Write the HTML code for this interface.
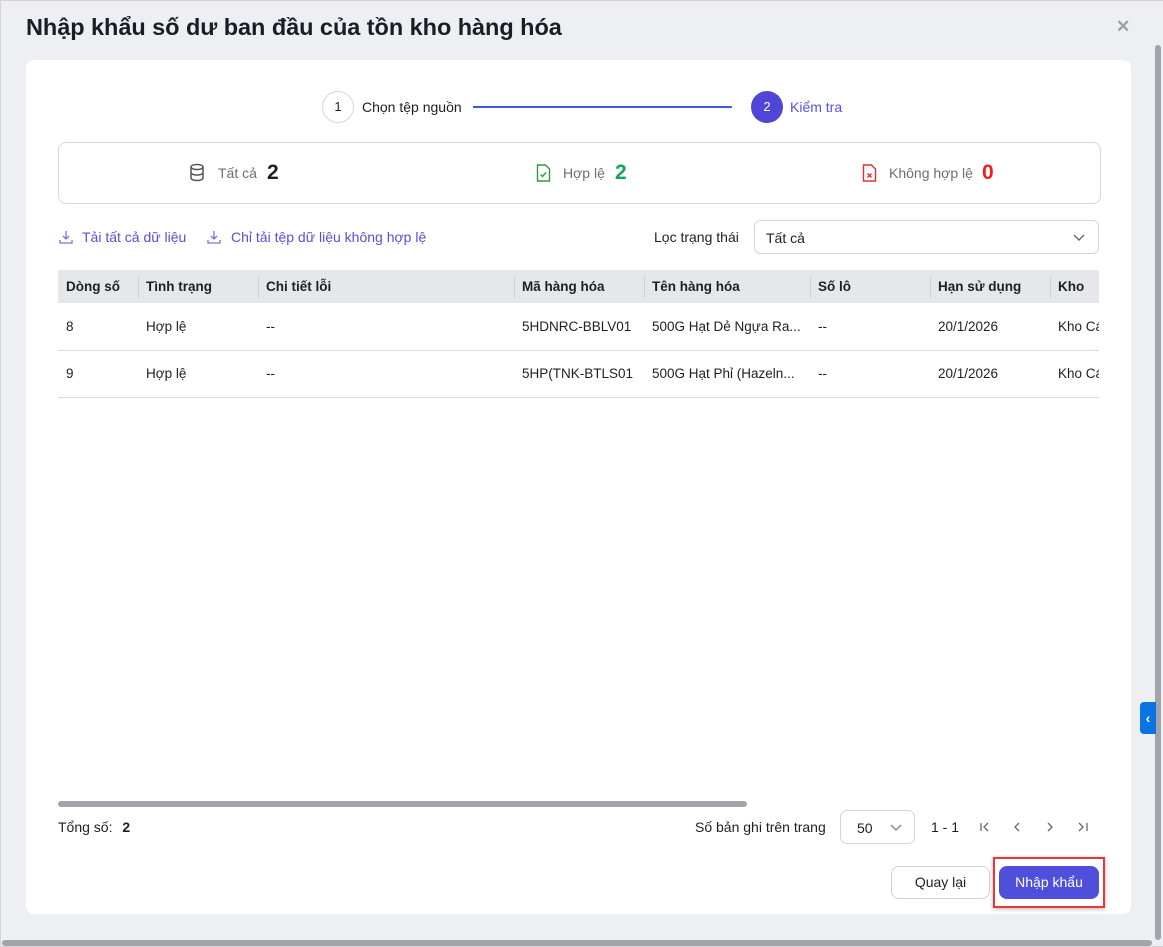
<!DOCTYPE html>
<html><head><meta charset="utf-8"><style>
*{box-sizing:border-box;margin:0;padding:0}
body{width:1163px;height:947px;overflow:hidden;background:#eeeff3;font-family:"Liberation Sans","Noto Sans CJK SC",sans-serif;color:#1f1f1f;position:relative;font-size:14px}
.abs{position:absolute}
.frame{left:0;top:0;width:1163px;height:947px;border:1px solid #d8d2d6;border-right:none}
.title{left:26px;top:14px;font-size:23.5px;font-weight:bold;color:#1a1d23;letter-spacing:-0.05px}
.close{left:1116px;top:17px;font-size:17px;color:#9b9ea5;font-weight:bold}
.vscroll{left:1155px;top:45px;width:6px;height:895px;background:#a1a4ab;border-radius:3px}
.hscroll{left:2px;top:940px;width:1150px;height:6px;background:#a1a4ab;border-radius:3px}
.card{left:26px;top:60px;width:1105px;height:854px;background:#fff;border-radius:8px}
.circ{width:32px;height:32px;border-radius:50%;text-align:center;line-height:30px;font-size:13px}
.stats{left:58px;top:142px;width:1043px;height:62px;border:1px solid #d6d7dc;border-radius:8px}
.lbl{font-size:14px;color:#6b6e75}
.num{font-size:21px;font-weight:bold}
.link{color:#5a4fd6;font-size:14px}
.sel{left:754px;top:220px;width:345px;height:34px;border:1px solid #d3d5da;border-radius:6px;padding:9px 11px;font-size:14px}
table{position:absolute;left:58px;top:270px;width:1041px;border-collapse:collapse;font-size:13.5px;table-layout:fixed}
th{background:#e6e7eb;height:33px;text-align:left;font-weight:bold;padding:0 8px;position:relative;white-space:nowrap;overflow:hidden}
th+th:before{content:"";position:absolute;left:0;top:6px;height:22px;border-left:1px solid #cfd1d6}
td{height:47px;border-bottom:1px solid #d9dadf;padding:0 8px;white-space:nowrap;overflow:hidden}
.btn{height:33px;border-radius:8px;font-size:14px;text-align:center;line-height:31px}
</style></head><body>
<div class="abs frame"></div>
<div class="abs title">Nhập khẩu số dư ban đầu của tồn kho hàng hóa</div>
<div class="abs close">✕</div>
<div class="abs vscroll"></div>
<div class="abs hscroll"></div>
<div class="abs card"></div>

<div class="abs circ" style="left:322px;top:91px;border:1px solid #d6d7dc">1</div>
<div class="abs" style="left:362px;top:99px;font-size:14px">Chọn tệp nguồn</div>
<div class="abs" style="left:473px;top:106px;width:259px;height:2px;background:#3c5be0"></div>
<div class="abs circ" style="left:751px;top:91px;background:#4f46d8;color:#fff;line-height:32px">2</div>
<div class="abs" style="left:790px;top:99px;font-size:14px;color:#5452e0">Kiểm tra</div>

<div class="abs stats"></div>
<svg class="abs" style="left:189px;top:163px" width="16" height="19" viewBox="0 0 16 19" fill="none" stroke="#555" stroke-width="1.5"><ellipse cx="8" cy="4" rx="6" ry="2.5"/><path d="M2 4v11c0 1.4 2.7 2.5 6 2.5s6-1.1 6-2.5V4M2 9.5c0 1.4 2.7 2.5 6 2.5s6-1.1 6-2.5"/></svg>
<div class="abs lbl" style="left:218px;top:165px">Tất cả</div>
<div class="abs num" style="left:267px;top:161px">2</div>
<svg class="abs" style="left:536px;top:164px" width="15" height="18" viewBox="0 0 15 18" fill="none" stroke="#2e9a3d" stroke-width="1.4"><path d="M1.5 1h8l4 4v12h-12z"/><path d="M4.5 10.5l2 2 3.5-4"/></svg>
<div class="abs lbl" style="left:563px;top:165px">Hợp lệ</div>
<div class="abs num" style="left:615px;top:161px;color:#17a35a">2</div>
<svg class="abs" style="left:862px;top:164px" width="15" height="18" viewBox="0 0 15 18" fill="none" stroke="#e03030" stroke-width="1.4"><path d="M1.5 1h8l4 4v12h-12z"/><path d="M5.5 9.5l4 4M9.5 9.5l-4 4"/></svg>
<div class="abs lbl" style="left:889px;top:165px">Không hợp lệ</div>
<div class="abs num" style="left:982px;top:161px;color:#f01c1c">0</div>

<svg class="abs" style="left:59px;top:230px" width="14" height="14" viewBox="0 0 14 14" fill="none" stroke="#7b72e0" stroke-width="1.3"><path d="M7 1v8M4 6l3 3 3-3M1 10v3h12v-3"/></svg>
<div class="abs link" style="left:82px;top:229px">Tải tất cả dữ liệu</div>
<svg class="abs" style="left:207px;top:230px" width="14" height="14" viewBox="0 0 14 14" fill="none" stroke="#7b72e0" stroke-width="1.3"><path d="M7 1v8M4 6l3 3 3-3M1 10v3h12v-3"/></svg>
<div class="abs link" style="left:231px;top:229px">Chỉ tải tệp dữ liệu không hợp lệ</div>
<div class="abs" style="left:654px;top:229px">Lọc trạng thái</div>
<div class="abs sel">Tất cả</div>
<svg class="abs" style="left:1073px;top:232px" width="12" height="10" viewBox="0 0 12 10" fill="none" stroke="#666" stroke-width="1.4"><path d="M1 3l5 5 5-5"/></svg>

<table>
<colgroup><col style="width:80px"><col style="width:120px"><col style="width:256px"><col style="width:130px"><col style="width:166px"><col style="width:120px"><col style="width:120px"><col style="width:49px"></colgroup>
<tr><th>Dòng số</th><th>Tình trạng</th><th>Chi tiết lỗi</th><th>Mã hàng hóa</th><th>Tên hàng hóa</th><th>Số lô</th><th>Hạn sử dụng</th><th>Kho</th></tr>
<tr><td>8</td><td>Hợp lệ</td><td>--</td><td>5HDNRC-BBLV01</td><td>500G Hạt Dẻ Ngựa Ra...</td><td>--</td><td>20/1/2026</td><td>Kho Cá</td></tr>
<tr><td>9</td><td>Hợp lệ</td><td>--</td><td>5HP(TNK-BTLS01</td><td>500G Hạt Phỉ (Hazeln...</td><td>--</td><td>20/1/2026</td><td>Kho Cá</td></tr>
</table>

<div class="abs" style="left:1140px;top:702px;width:16px;height:32px;background:#0b74e5;border-radius:4px 0 0 4px;color:#fff;font-weight:bold;text-align:center;line-height:32px;font-size:14px">‹</div>

<div class="abs" style="left:58px;top:801px;width:689px;height:6px;background:#a1a4ab;border-radius:3px"></div>
<div class="abs" style="left:58px;top:819px">Tổng số: <b style="margin-left:6px">2</b></div>
<div class="abs" style="left:695px;top:819px">Số bản ghi trên trang</div>
<div class="abs" style="left:840px;top:810px;width:75px;height:34px;border:1px solid #d3d5da;border-radius:7px;padding:9px 16px">50</div>
<svg class="abs" style="left:890px;top:823px" width="12" height="9" viewBox="0 0 12 9" fill="none" stroke="#888" stroke-width="1.4"><path d="M1 2l5 5 5-5"/></svg>
<div class="abs" style="left:931px;top:819px">1 - 1</div>
<svg class="abs" style="left:978px;top:820px" width="115" height="14" viewBox="0 0 115 14" fill="none" stroke="#666" stroke-width="1.3"><path d="M3 3v8M10 3l-4 4 4 4M41 3l-4 4 4 4M70 3l4 4-4 4M101 3l4 4-4 4M109 3v8"/></svg>

<div class="abs btn" style="left:891px;top:866px;width:99px;border:1px solid #cfd1d6">Quay lại</div>
<div class="abs" style="left:993px;top:857px;width:112px;height:51px;border:2px solid #e5383b;box-shadow:0 1px 4px rgba(0,0,0,.3)"></div>
<div class="abs btn" style="left:999px;top:866px;width:100px;background:#4f4fdc;color:#fff;line-height:33px">Nhập khẩu</div>
</body></html>
